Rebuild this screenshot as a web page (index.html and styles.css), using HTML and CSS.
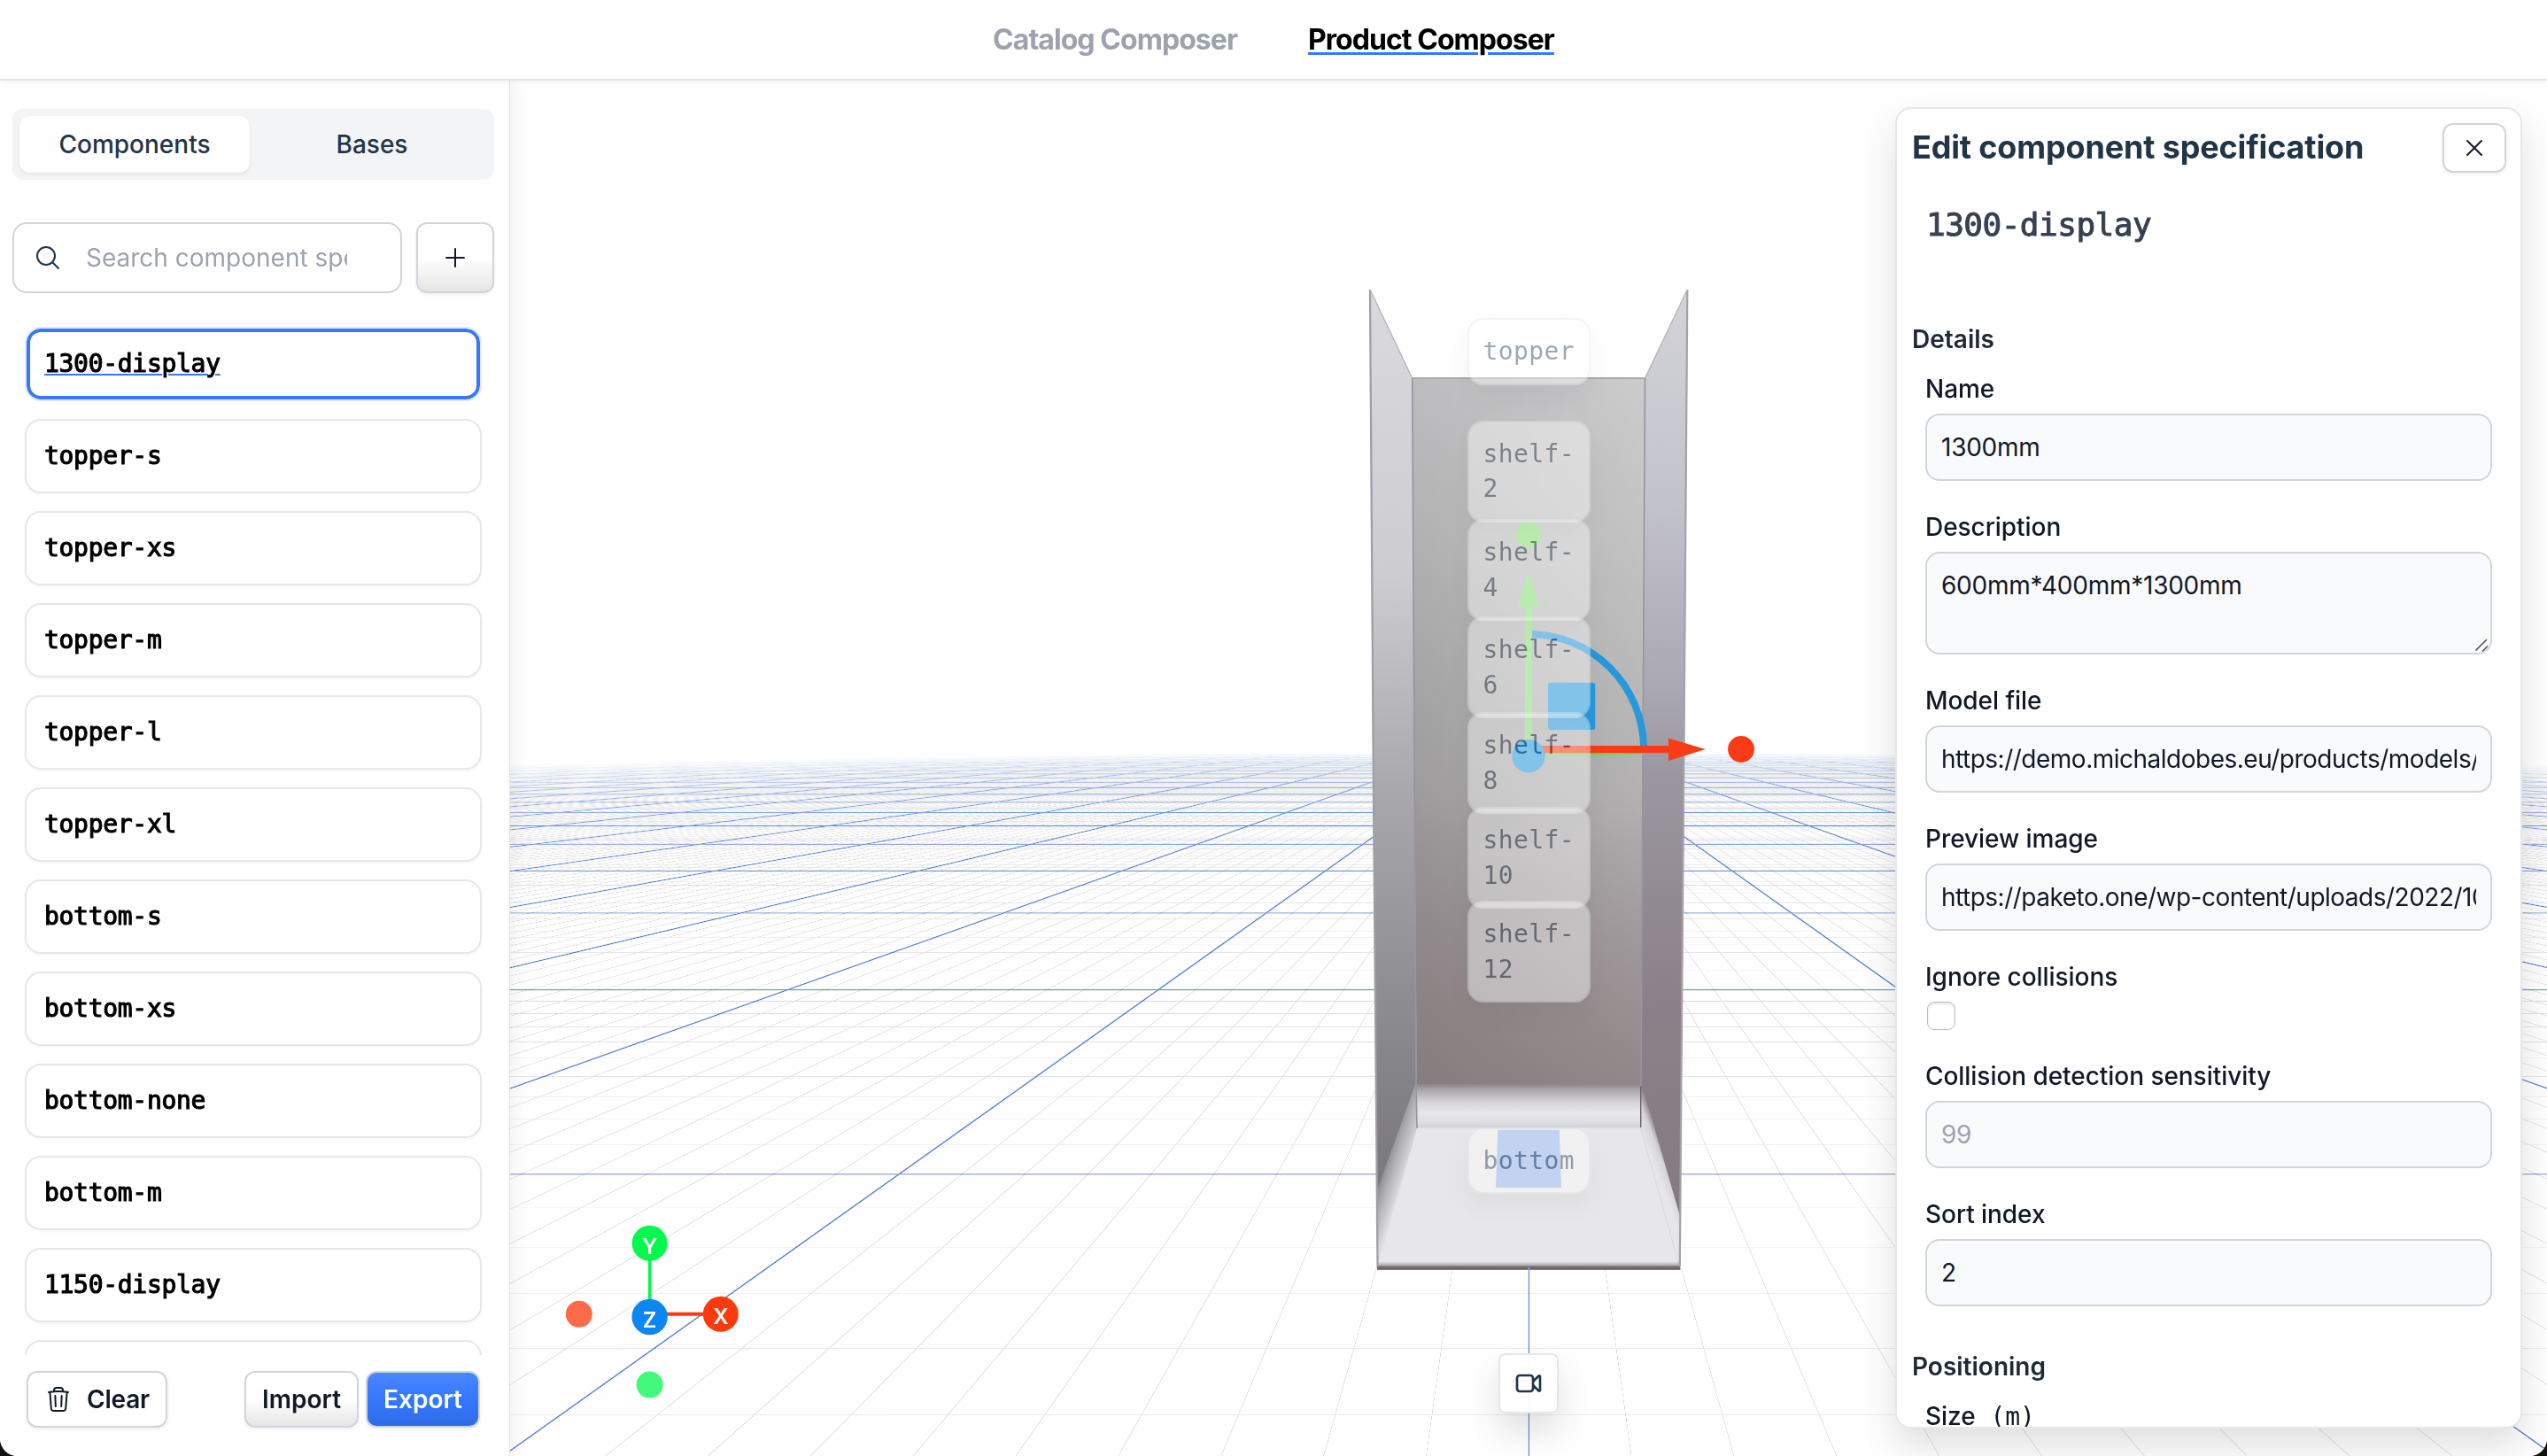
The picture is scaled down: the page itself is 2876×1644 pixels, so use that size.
FILE: index.html
```html
<!DOCTYPE html>
<html lang="en">
<head>
<meta charset="utf-8">
<title>Product Composer</title>
<link rel="stylesheet" href="styles.css">
</head>
<body>
<div class="app">
  <header class="topbar">
    <a class="nav-link">Catalog Composer</a>
    <a class="nav-link nav-link-active">Product Composer</a>
  </header>
  <main class="workspace">
    <aside class="sidebar">
      <div class="tabs">
        <button class="tab tab-active">Components</button>
        <button class="tab">Bases</button>
      </div>
      <div class="search-row">
        <div class="search">
          <svg class="icon" viewBox="0 0 24 24"><path d="M21 21l-5.197-5.197m0 0A7.5 7.5 0 105.196 5.196a7.5 7.5 0 0010.607 10.607z"/></svg>
          <span class="placeholder">Search component specification</span>
        </div>
        <button class="btn btn-shaded btn-add"><svg class="icon" viewBox="0 0 24 24"><path d="M12 4.5v15m7.5-7.5h-15"/></svg></button>
      </div>
      <div class="list">
        <div class="item item-selected"><span>1300-display</span></div>
        <div class="item">topper-s</div>
        <div class="item">topper-xs</div>
        <div class="item">topper-m</div>
        <div class="item">topper-l</div>
        <div class="item">topper-xl</div>
        <div class="item">bottom-s</div>
        <div class="item">bottom-xs</div>
        <div class="item">bottom-none</div>
        <div class="item">bottom-m</div>
        <div class="item">1150-display</div>
        <div class="item"></div>
      </div>
      <div class="actions">
        <button class="btn btn-clear"><svg class="icon" viewBox="0 0 24 24"><path d="M14.74 9l-.346 9m-4.788 0L9.26 9m9.968-3.21c.342.052.682.107 1.022.166m-1.022-.165L18.16 19.673a2.25 2.25 0 01-2.244 2.077H8.084a2.25 2.25 0 01-2.244-2.077L4.772 5.79m14.456 0a48.108 48.108 0 00-3.478-.397m-12 .562c.34-.059.68-.114 1.022-.165m0 0a48.11 48.11 0 013.478-.397m7.5 0v-.916c0-1.18-.91-2.164-2.09-2.201a51.964 51.964 0 00-3.32 0c-1.18.037-2.09 1.022-2.09 2.201v.916m7.5 0a48.667 48.667 0 00-7.5 0"/></svg>Clear</button>
        <button class="btn btn-shaded">Import</button>
        <button class="btn btn-primary">Export</button>
      </div>
    </aside>
    <section class="viewport">
      <canvas class="grid-canvas" id="grid" width="2300" height="1553"></canvas>
      <svg class="scene" viewBox="576 91 2300 1553">
        <defs>
          <linearGradient id="left" gradientUnits="userSpaceOnUse" x1="1570" y1="330" x2="1585" y2="1390">
            <stop offset="0" stop-color="#dadade"/><stop offset=".3" stop-color="#cdccd1"/><stop offset=".52" stop-color="#aaa9ae"/><stop offset=".8" stop-color="#88878b"/><stop offset="1" stop-color="#757377"/>
          </linearGradient>
          <linearGradient id="right" gradientUnits="userSpaceOnUse" x1="1890" y1="330" x2="1875" y2="1390">
            <stop offset="0" stop-color="#d3d3d8"/><stop offset=".22" stop-color="#c3c3cd"/><stop offset=".42" stop-color="#aaa8b2"/><stop offset=".52" stop-color="#9a969f"/><stop offset=".75" stop-color="#8c818a"/><stop offset="1" stop-color="#867a80"/>
          </linearGradient>
          <linearGradient id="back" gradientUnits="userSpaceOnUse" x1="1650" y1="420" x2="1730" y2="1230">
            <stop offset="0" stop-color="#bdbdbf"/><stop offset=".25" stop-color="#b0b0b1"/><stop offset=".6" stop-color="#9c9a9b"/><stop offset="1" stop-color="#897e81"/>
          </linearGradient>
          <linearGradient id="backlight" gradientUnits="userSpaceOnUse" x1="1600" y1="0" x2="1858" y2="0">
            <stop offset="0" stop-color="#fff" stop-opacity="0"/><stop offset="1" stop-color="#fff" stop-opacity=".24"/>
          </linearGradient>
          <linearGradient id="backdark" gradientUnits="userSpaceOnUse" x1="0" y1="900" x2="0" y2="1225">
            <stop offset="0" stop-color="#857a7c" stop-opacity="0"/><stop offset="1" stop-color="#857a7c" stop-opacity=".6"/>
          </linearGradient>
          <linearGradient id="step" x1="0" y1="0" x2="0" y2="1">
            <stop offset="0" stop-color="#8c8385"/><stop offset=".12" stop-color="#a8a4a7"/><stop offset=".42" stop-color="#d6d5da"/><stop offset=".65" stop-color="#e5e5ea"/><stop offset=".85" stop-color="#dedfe3"/><stop offset="1" stop-color="#cfd0d4"/>
          </linearGradient>
          <linearGradient id="skirtl" gradientUnits="userSpaceOnUse" x1="1563" y1="1304" x2="1590" y2="1313">
            <stop offset="0" stop-color="#dcdce0" stop-opacity="0"/><stop offset=".55" stop-color="#cfced3" stop-opacity=".7"/><stop offset="1" stop-color="#dcdbe0"/>
          </linearGradient>
          <linearGradient id="skirtr" gradientUnits="userSpaceOnUse" x1="1884" y1="1304" x2="1866" y2="1311">
            <stop offset="0" stop-color="#dcdce0" stop-opacity="0"/><stop offset=".45" stop-color="#dcdce0" stop-opacity=".9"/><stop offset="1" stop-color="#e6e6ea"/>
          </linearGradient>
          <linearGradient id="front" x1="0" y1="0" x2="0" y2="1">
            <stop offset="0" stop-color="#d9dadd"/><stop offset=".35" stop-color="#b9b9bc"/><stop offset=".6" stop-color="#7a7072"/><stop offset="1" stop-color="#68575a"/>
          </linearGradient>
        </defs>
        <polygon points="1594.3,427 1857.7,427 1852.7,1274 1600,1274" fill="url(#back)"/>
        <polygon points="1594.3,427 1857.7,427 1852.7,1274 1600,1274" fill="url(#backlight)"/>
        <polygon points="1597,900 1855,900 1852.7,1274 1600,1274" fill="url(#backdark)"/>
        <polygon points="1546,327 1594.5,427 1600,1274 1556,1432 1550.3,900" fill="url(#left)"/>
        <polygon points="1906,327 1857.5,427 1852.7,1274 1897,1432 1901.7,900" fill="url(#right)"/>
        <rect x="1599.5" y="1224" width="253.3" height="50.5" fill="url(#step)"/>
        <polygon points="1599,1222 1600,1274 1556,1430 1554.5,1345" fill="url(#skirtl)"/>
        <polygon points="1853.3,1222 1852.7,1274 1896,1430 1897.5,1375" fill="url(#skirtr)"/>
        <polygon points="1600,1273.5 1852.7,1273.5 1896,1427 1556,1427" fill="#e7e7ea"/>
        <path d="M1852.7 1274L1895 1425" stroke="#d8d8dc" fill="none"/>
        <rect x="1555" y="1425" width="342.3" height="8.8" fill="url(#front)"/>
        <g fill="none" stroke="#97959c" stroke-width="1.6">
          <path d="M1594.5 427H1857.5" stroke="#a9a8ad" stroke-width="2"/>
          <path d="M1594.7 427L1599 1225L1600 1274M1857.5 427L1852.9 1225"/>
          <path d="M1547 327L1551 900L1555.5 1430" stroke="#a09ea3" stroke-width="2.2"/>
          <path d="M1905.3 327L1901 900L1896.8 1430" stroke="#a6a1a8" stroke-width="2.2"/>
          <path d="M1547 327L1594.5 427M1905.3 327L1857.5 427" stroke="#b5b4b9" stroke-width="1.4"/>
          <path d="M1852.7 1227V1273" stroke="#705f63" stroke-width="1.4"/>
        </g>
        <path d="M1726.3 1431V1434" stroke="#7f9fe0" stroke-width="2"/>
        <g fill="#89df75">
          <circle cx="1726" cy="603.5" r="14.5"/>
          <path d="M1726.3 645L1739 685.4H1730V842H1722V685.4H1713.3Z"/>
          <path d="M1744 849H1858V851L1820 853.5H1744Z" fill="#7dd069"/>
        </g>
        <path d="M1730 716A130 130 0 0 1 1856 842" fill="none" stroke="#2798dc" stroke-width="8"/>
        <rect x="1748" y="770.7" width="53.3" height="53.2" rx="3" fill="#2798dc"/>
        <path d="M1740 842H1884V833.5L1925.7 846L1884 859V850.3H1740Z" fill="#f93c15"/>
        <circle cx="1966" cy="846" r="15" fill="#f93c15"/>
        <circle cx="1726" cy="853.8" r="18.7" fill="#2798dc"/>
        <polygon points="1691.3,1275.7 1760.7,1275.7 1763,1341 1689,1341" fill="#94b4e6"/>
        <g class="axes">
          <path d="M733.7 1404V1470" stroke="#05f84c" stroke-width="3.6"/>
          <path d="M750 1483.8H800" stroke="#fc3a0c" stroke-width="4"/>
          <circle cx="653.8" cy="1483.8" r="15" fill="#ff6a48"/>
          <circle cx="733.6" cy="1563.6" r="15" fill="#42f97c"/>
          <circle cx="733.6" cy="1403.8" r="20" fill="#05f84c"/>
          <circle cx="813.8" cy="1483.8" r="20" fill="#fc3a0c"/>
          <circle cx="733.6" cy="1487" r="20.2" fill="#0b87f2"/>
          <text x="733.6" y="1415.5">Y</text>
          <text x="813.8" y="1495.3">X</text>
          <text x="733.6" y="1499.3">Z</text>
        </g>
      </svg>
      <div class="slot" style="top:268.3px">topper</div>
      <div class="slot" style="top:383.9px">shelf-<br>2</div>
      <div class="slot" style="top:495.2px">shelf-<br>4</div>
      <div class="slot" style="top:605.3px">shelf-<br>6</div>
      <div class="slot" style="top:713.4px">shelf-<br>8</div>
      <div class="slot" style="top:820.2px">shelf-<br>10</div>
      <div class="slot" style="top:926.2px">shelf-<br>12</div>
      <div class="slot" style="top:1181.8px">bottom</div>
      <button class="camera"><svg class="icon icon-bold" viewBox="0 0 24 24"><path d="M15.75 10.5l4.72-4.72a.75.75 0 011.28.53v11.38a.75.75 0 01-1.28.53l-4.72-4.72M4.5 18.75h9a2.25 2.25 0 002.25-2.25v-9a2.25 2.25 0 00-2.25-2.25h-9A2.25 2.25 0 002.25 7.5v9a2.25 2.25 0 002.25 2.25z"/></svg></button>
      <section class="panel">
        <div class="panel-head">
          <h2 class="panel-title">Edit component specification</h2>
          <button class="btn btn-close"><svg class="icon" viewBox="0 0 24 24"><path d="M6 18L18 6M6 6l12 12"/></svg></button>
        </div>
        <div class="panel-id">1300-display</div>
        <h3 class="section-title">Details</h3>
        <div class="fields">
          <div class="field"><label>Name</label><div class="input">1300mm</div></div>
          <div class="field"><label>Description</label><div class="input input-area">600mm*400mm*1300mm<svg class="grip" viewBox="0 0 16 16"><path d="M1.5 14.5L14 2M9 15.5L15 9.5"/></svg></div></div>
          <div class="field"><label>Model file</label><div class="input"><span class="clip">https://demo.michaldobes.eu/products/models/</span></div></div>
          <div class="field"><label>Preview image</label><div class="input"><span class="clip">https://paketo.one/wp-content/uploads/2022/10/</span></div></div>
          <div class="field"><label>Ignore collisions</label><div class="checkbox"></div></div>
          <div class="field"><label>Collision detection sensitivity</label><div class="input input-empty">99</div></div>
          <div class="field"><label>Sort index</label><div class="input">2</div></div>
        </div>
        <h3 class="section-title section-next">Positioning</h3>
        <div class="fields">
          <div class="field"><label>Size<span class="unit"> (m)</span></label></div>
        </div>
      </section>
    </section>
  </main>
</div>
<script src="grid.js"></script>
</body>
</html>
```
FILE: styles.css
```css
* { box-sizing: border-box; }
body { margin: 0; background: #14110c; font-family: Inter, "Liberation Sans", sans-serif; font-size: 28px; line-height: 40px; color: #111827; }
button { font: inherit; color: inherit; margin: 0; padding: 0; border: 0; background: none; }
h2, h3 { margin: 0; }
.app { width: 2876px; height: 1644px; display: flex; flex-direction: column; background: #fff; border-radius: 0 0 20px 20px; overflow: hidden; }
.topbar { position: relative; z-index: 2; flex: none; height: 91px; display: flex; align-items: center; justify-content: center; gap: 80px; border-bottom: 2px solid #e5e7eb; background: #fff; box-shadow: 0 2px 6px rgba(0,0,0,.06); }
.nav-link { font-size: 32px; font-weight: 650; letter-spacing: -.95px; color: #9ca3af; }
.nav-link-active { color: #000; text-decoration: underline; text-decoration-color: #3478ff; text-decoration-thickness: 2.5px; text-underline-offset: 3px; }
.workspace { flex: 1; min-height: 0; display: grid; grid-template-columns: 576px 1fr; }
.icon { width: 32px; height: 32px; flex: none; fill: none; stroke: currentColor; stroke-width: 1.5; stroke-linecap: round; stroke-linejoin: round; }
.icon-bold { stroke-width: 2; }

.sidebar { position: relative; z-index: 1; display: flex; flex-direction: column; min-height: 0; padding: 32px 17px 32px 14px; border-right: 1px solid #e0e2e6; background: #fff; box-shadow: 4px 0 20px rgba(0,0,0,.05); }
.tabs { flex: none; height: 80px; padding: 8px; display: grid; grid-template-columns: 1fr 1fr; gap: 8px; background: #f3f4f6; border-radius: 12px; }
.tab { border-radius: 12px; font-weight: 550; color: #213547; }
.tab-active { background: #fff; box-shadow: 0 2px 4px rgba(0,0,0,.07); }
.search-row { flex: none; display: flex; gap: 16px; margin-top: 48px; height: 80px; }
.search { flex: 1; min-width: 0; display: flex; align-items: center; padding: 0 60px 0 22px; border: 2px solid #d1d5db; border-radius: 16px; color: #213547; }
.placeholder { margin-left: 27px; flex: 1; min-width: 0; overflow: hidden; white-space: nowrap; color: #9ca3af; }
.btn { display: flex; align-items: center; justify-content: center; border: 2px solid #d1d5db; border-radius: 12px; background: #fff; font-weight: 500; box-shadow: 0 2px 4px rgba(0,0,0,.06); }
.btn-shaded { background: linear-gradient(#fff 50%, #e5e5e5); }
.btn-add { flex: none; width: 88px; }
.list { flex: 1; min-height: 0; overflow: hidden; margin-top: 38px; padding: 0 14px; display: flex; flex-direction: column; gap: 20px; }
.item { flex: none; height: 84px; display: flex; align-items: center; padding: 0 20px; border: 2px solid #e5e7eb; border-radius: 18px; box-shadow: 0 2px 3px rgba(0,0,0,.03); font: 28px/40px "DejaVu Sans Mono", monospace; -webkit-text-stroke: 1.1px currentColor; letter-spacing: -.3px; color: #000; }
.item-selected { box-shadow: inset 0 0 0 4px #3478ff; }
.item-selected span { text-decoration: underline; text-decoration-color: #3478ff; text-decoration-thickness: 2px; text-underline-offset: 2px; }
.actions { flex: none; display: flex; gap: 8px; margin-top: 18px; padding: 0 16px; height: 64px; }
.actions .btn { padding: 0 18px; font-weight: 600; }
.actions .btn-clear { margin-right: auto; gap: 16px; letter-spacing: -.2px; }
.actions .btn-primary { color: #fff; background: linear-gradient(#4a86ff, #3478ff 50%, #2f6be6); }

.viewport { position: relative; overflow: hidden; background: #fefefe; }
.grid-canvas, .scene { position: absolute; left: 0; top: 0; width: 2300px; height: 1553px; }
.axes text { fill: #fff; font: 24px Inter, sans-serif; font-weight: 600; text-anchor: middle; }
.slot { position: absolute; left: 1080.5px; width: 139px; padding: 16px; border: 2px solid #e5e7eb; border-radius: 18px; background: #fff; opacity: .42; font: 28px/39.4px "DejaVu Sans Mono", monospace; letter-spacing: .4px; color: #213547; box-shadow: 0 16px 30px rgba(0,0,0,.1); }
.camera { position: absolute; left: 1116px; top: 1437px; width: 68px; height: 68px; display: flex; align-items: center; justify-content: center; border: 2px solid #e5e7eb; border-radius: 8px; background: rgba(255,255,255,.97); color: #213547; box-shadow: 0 20px 36px rgba(0,0,0,.12); }

.panel { position: absolute; left: 1564px; top: 30px; width: 708px; height: 1492px; overflow: hidden; padding: 16px 16px 0 17px; border: 2px solid #e5e7eb; border-radius: 18px; background: #fff; box-shadow: 0 20px 40px rgba(0,0,0,.12); }
.panel-head { display: flex; align-items: flex-start; justify-content: space-between; height: 56px; }
.panel-title { font-size: 36px; line-height: 54px; font-weight: 700; letter-spacing: -.15px; color: #213547; }
.btn-close { width: 72px; height: 56px; }
.panel-id { margin: 31px 0 0 16px; height: 137px; font: 36px/56px "DejaVu Sans Mono", monospace; letter-spacing: -.5px; -webkit-text-stroke: 1px currentColor; color: #374151; }
.section-title { font-size: 28px; line-height: 40px; font-weight: 600; color: #1f2937; }
.section-next { margin-top: 48px; }
.fields { margin: 16px 16px 0 15px; display: flex; flex-direction: column; gap: 32px; }
.field { display: flex; flex-direction: column; gap: 8px; }
.field label { font-weight: 450; height: 40px; letter-spacing: -.05px; }
.input { position: relative; height: 76px; padding: 16px; border: 2px solid #d1d5db; border-radius: 16px; background: #f9fafb; white-space: nowrap; letter-spacing: -.25px; }
.input-area { height: 116px; }
.input-empty { color: #9ca3af; }
.clip { display: block; overflow: hidden; letter-spacing: -.5px; }
.grip { position: absolute; right: 2px; bottom: 1px; width: 16px; height: 16px; fill: none; stroke: #555; stroke-width: 1.6; }
.checkbox { width: 32px; height: 32px; margin-left: 2px; border: 1px solid #bdbdbd; border-radius: 8px; box-shadow: inset 0 2px 3px rgba(0,0,0,.1); }
.unit { font-family: "DejaVu Sans Mono", monospace; white-space: pre; }
```
FILE: grid.js
```js
// Infinite ground grid in perspective: 1-unit cells, 10-unit sections, fading with distance.
const canvas = document.getElementById('grid');
const ctx = canvas.getContext('2d');
const W = canvas.width, H = canvas.height;
const vanishX = 1150.3, horizon = 729;
const cellX = 0.1406, cellZ = 0.0001382, zOrigin = 0.0019767;
const img = ctx.createImageData(W, H);
const px = img.data;

function line(r, width, thickness) {
  const d = Math.abs(r - Math.round(r)) / width;
  return 1 - Math.min(d + 1 - thickness, 1);
}

for (let y = horizon + 8; y < H; y++) {
  const dy = y + 0.5 - horizon;
  const v = (1 / dy - zOrigin) / cellZ;
  const fv = 1 / (dy * dy * cellZ);
  const z = 1 / (dy * cellZ);
  const cellV = line(v, fv, 0.5), sectionV = line(v / 10, fv / 10, 1);
  for (let x = 0; x < W; x++) {
    const dx = x + 0.5 - vanishX;
    const u = dx / (cellX * dy);
    const fu = 1 / (cellX * dy) + Math.abs(dx) / (cellX * dy * dy);
    const dist = Math.sqrt(u * u + z * z);
    const fade = Math.pow(1 - Math.min(dist / 255, 1), 1.3);
    if (fade <= 0) continue;
    const g1 = Math.max(line(u, fu, 0.5), cellV);
    const g2 = Math.max(line(u / 10, fu / 10, 1), sectionV);
    if (g1 + g2 <= 0) continue;
    let a = Math.min(1, (g1 + g2) * fade);
    a *= 0.75 + 0.25 * g2;
    const i = (y * W + x) * 4;
    px[i] = 145 + (62 - 145) * g2;
    px[i + 1] = 145 + (118 - 145) * g2;
    px[i + 2] = 145 + (228 - 145) * g2;
    px[i + 3] = a * 255;
  }
}
ctx.putImageData(img, 0, 0);
```
